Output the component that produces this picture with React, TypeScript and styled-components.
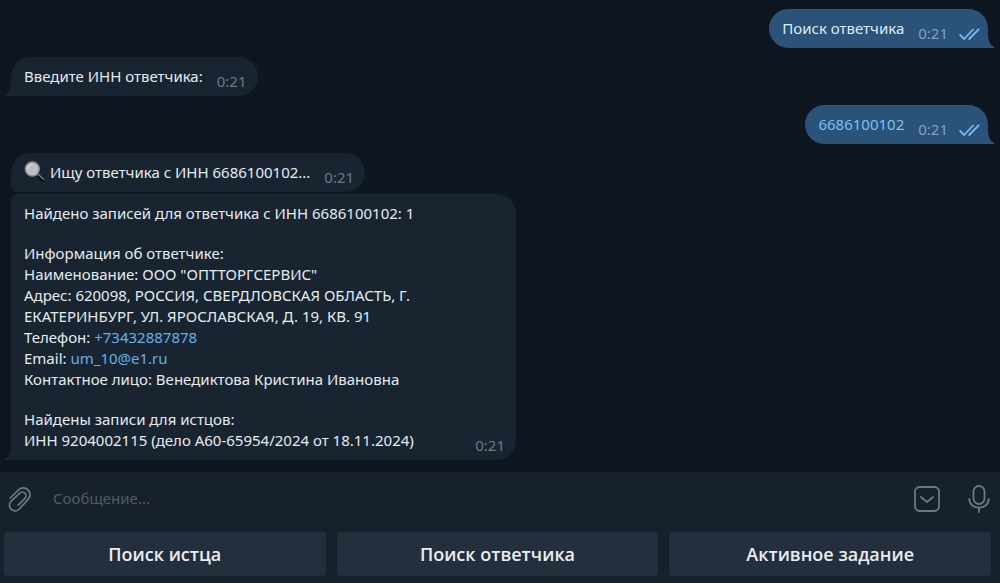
import React from "react";
import styled, { createGlobalStyle, css } from "styled-components";

const GlobalStyle = createGlobalStyle`
  * { box-sizing: border-box; }
  body {
    margin: 0;
    background: #0e1620;
    font-family: "Noto Sans", "Open Sans", sans-serif;
    font-size: 15px;
    line-height: 21px;
    color: #e6ebef;
  }
`;

const Page = styled.div`
  display: flex;
  flex-direction: column;
  min-height: 100vh;
`;

const Chat = styled.main`
  flex: 1;
  display: flex;
  flex-direction: column;
  gap: 9px;
  padding: 9px 12px 10px 11px;
`;

const Group = styled.div`
  display: flex;
  flex-direction: column;
  gap: 2px;
`;

type BubbleProps = { $out?: boolean; $first?: boolean; $last?: boolean };

const Bubble = styled.article<BubbleProps>`
  position: relative;
  display: flex;
  align-items: flex-end;
  width: fit-content;
  max-width: 505px;
  padding: 9px 11px 9px 13px;
  background: #182531;
  border-radius: 20px;
  ${(p) =>
    p.$out
      ? css`
          align-self: flex-end;
          padding-right: 8px;
          background: #2b5278;
          color: #dfeaf4;
          border-bottom-right-radius: 0;
        `
      : css`
          border-bottom-left-radius: ${p.$last ? "0" : "6px"};
          border-top-left-radius: ${p.$first ? "20px" : "6px"};
        `}
`;

const Body = styled.div`
  flex: 1;
  display: flex;
  flex-direction: column;
  gap: 19px;
`;

const Text = styled.p`
  margin: 0;
`;

const Link = styled.a<{ $out?: boolean }>`
  color: ${(p) => (p.$out ? "#7cc0f5" : "#67aee9")};
  text-decoration: none;
`;

const Meta = styled.span<{ $out?: boolean }>`
  display: flex;
  align-items: center;
  gap: 11px;
  margin: 0 0 -5px 14px;
  font-size: 15px;
  color: ${(p) => (p.$out ? "#7ba3cb" : "#6a7986")};
`;

const TailShape = styled.svg<{ $out?: boolean }>`
  position: absolute;
  bottom: 0;
  ${(p) => (p.$out ? "right: -7px; transform: scaleX(-1);" : "left: -7px;")}
`;

const Glass = styled.svg`
  margin: -4px 5px -4px 0;
`;

const Composer = styled.footer`
  background: #17212b;
  border-top: 1px solid #0b121a;
`;

const InputRow = styled.form`
  display: flex;
  align-items: center;
  height: 53px;
  padding: 0 10px 0 7px;
`;

const IconButton = styled.button`
  display: flex;
  padding: 0;
  border: 0;
  background: none;
  color: #6c7883;
`;

const MessageInput = styled.input`
  flex: 1;
  min-width: 0;
  margin: 0 20px;
  padding: 0;
  border: 0;
  outline: 0;
  background: none;
  font: inherit;
  color: #e6ebef;
  &::placeholder {
    color: #4f5b66;
    opacity: 1;
  }
`;

const Tools = styled.div`
  display: flex;
  align-items: center;
  gap: 27px;
`;

const Keyboard = styled.div`
  display: grid;
  grid-template-columns: repeat(3, 1fr);
  gap: 11px;
  padding: 7px 9px 7px 4px;
`;

const Key = styled.button`
  height: 44px;
  padding: 0;
  border: 0;
  border-radius: 4px;
  background: #242f3d;
  color: #e9eef3;
  font-family: "Open Sans", "Noto Sans", sans-serif;
  font-size: 18px;
  font-weight: 600;
`;

const Tail = ({ out }: { out?: boolean }) => (
  <TailShape $out={out} width="8" height="14" viewBox="0 0 8 14" aria-hidden="true">
    <path d="M8 0H7C7 7 5 10.500 0.800 13C0.200 13.500 0.500 14 1.200 14H8Z" fill={out ? "#2b5278" : "#182531"} />
  </TailShape>
);

const Checks = () => (
  <svg width="21" height="14" viewBox="0 0 21 14" fill="none" stroke="#6fbcf5" strokeWidth="1.8" strokeLinecap="round" strokeLinejoin="round" aria-label="Прочитано">
    <path d="M1.200 8l4 4L14 2.500M10.200 12L19.500 2.500" />
  </svg>
);

type MessageProps = BubbleProps & { children: React.ReactNode };

const Message = ({ $out, $first = true, $last = true, children }: MessageProps) => (
  <Bubble $out={$out} $first={$first} $last={$last}>
    <Body>{children}</Body>
    <Meta $out={$out}>
      <time>0:21</time>
      {$out && <Checks />}
    </Meta>
    {$last && <Tail out={$out} />}
  </Bubble>
);

export default function App() {
  return (
    <Page>
      <GlobalStyle />
      <Chat>
        <Message $out>
          <Text>Поиск ответчика</Text>
        </Message>
        <Message>
          <Text>Введите ИНН ответчика:</Text>
        </Message>
        <Message $out>
          <Text>
            <Link $out href="tel:6686100102">6686100102</Link>
          </Text>
        </Message>
        <Group>
          <Message $last={false}>
            <Text>
              <Glass width="21" height="21" viewBox="0 0 21 21" aria-hidden="true">
                <path d="M13 13L15 15" stroke="#8b9298" strokeWidth="2" />
                <path d="M14.800 15.200L18.800 19" stroke="#07090b" strokeWidth="3.200" strokeLinecap="round" />
                <path d="M15 14L19.500 18.300" stroke="#80868b" strokeWidth="1.300" strokeLinecap="round" />
                <circle cx="8.300" cy="8" r="7" fill="#b9bfc4" stroke="#858b90" strokeWidth="1.400" />
                <path d="M3.800 8A4.800 4.800 0 0 1 8.300 3.500" fill="none" stroke="#d3d7da" strokeWidth="1.500" strokeLinecap="round" />
              </Glass>
              Ищу ответчика с ИНН 6686100102...
            </Text>
          </Message>
          <Message $first={false}>
            <Text>Найдено записей для ответчика с ИНН 6686100102: 1</Text>
            <Text>
              Информация об ответчике:
              <br />
              Наименование: ООО "ОПТТОРГСЕРВИС"
              <br />
              Адрес: 620098, РОССИЯ, СВЕРДЛОВСКАЯ ОБЛАСТЬ, Г. ЕКАТЕРИНБУРГ, УЛ. ЯРОСЛАВСКАЯ, Д. 19, КВ. 91
              <br />
              Телефон: <Link href="tel:+73432887878">+73432887878</Link>
              <br />
              Email: <Link href="mailto:um_10@e1.ru">um_10@e1.ru</Link>
              <br />
              Контактное лицо: Венедиктова Кристина Ивановна
            </Text>
            <Text>
              Найдены записи для истцов:
              <br />
              ИНН 9204002115 (дело А60-65954/2024 от 18.11.2024)
            </Text>
          </Message>
        </Group>
      </Chat>
      <Composer>
        <InputRow>
          <IconButton type="button" aria-label="Прикрепить файл">
            <svg width="26" height="28" viewBox="0 0 26 28" fill="none" stroke="currentColor" strokeWidth="1.700" strokeLinecap="round" strokeLinejoin="round">
              <path d="M3.200 13L11.500 4.900A6.700 6.700 0 0 1 21 14.400L12.400 24A5.400 5.400 0 0 1 4 16.300L12.800 8.200A3.600 3.600 0 0 1 17.900 13.300L11.200 20.100" />
            </svg>
          </IconButton>
          <MessageInput aria-label="Сообщение" placeholder="Сообщение..." />
          <Tools>
            <IconButton type="button" aria-label="Скрыть клавиатуру бота">
              <svg width="28" height="28" viewBox="0 0 28 28" fill="none" stroke="currentColor" strokeWidth="1.800" strokeLinecap="round" strokeLinejoin="round">
                <rect x="2" y="2" width="24" height="24" rx="4.500" />
                <path d="M8 12l6 5 6-5" />
              </svg>
            </IconButton>
            <IconButton type="button" aria-label="Голосовое сообщение">
              <svg width="22" height="28" viewBox="0 0 22 28" fill="none" stroke="currentColor" strokeWidth="1.800" strokeLinecap="round">
                <rect x="5.500" y="1" width="11" height="18" rx="5.500" />
                <path d="M1.300 14C1.300 25.500 20.700 25.500 20.700 14M11 22.800V27" />
              </svg>
            </IconButton>
          </Tools>
        </InputRow>
        <Keyboard>
          <Key type="button">Поиск истца</Key>
          <Key type="button">Поиск ответчика</Key>
          <Key type="button">Активное задание</Key>
        </Keyboard>
      </Composer>
    </Page>
  );
}
